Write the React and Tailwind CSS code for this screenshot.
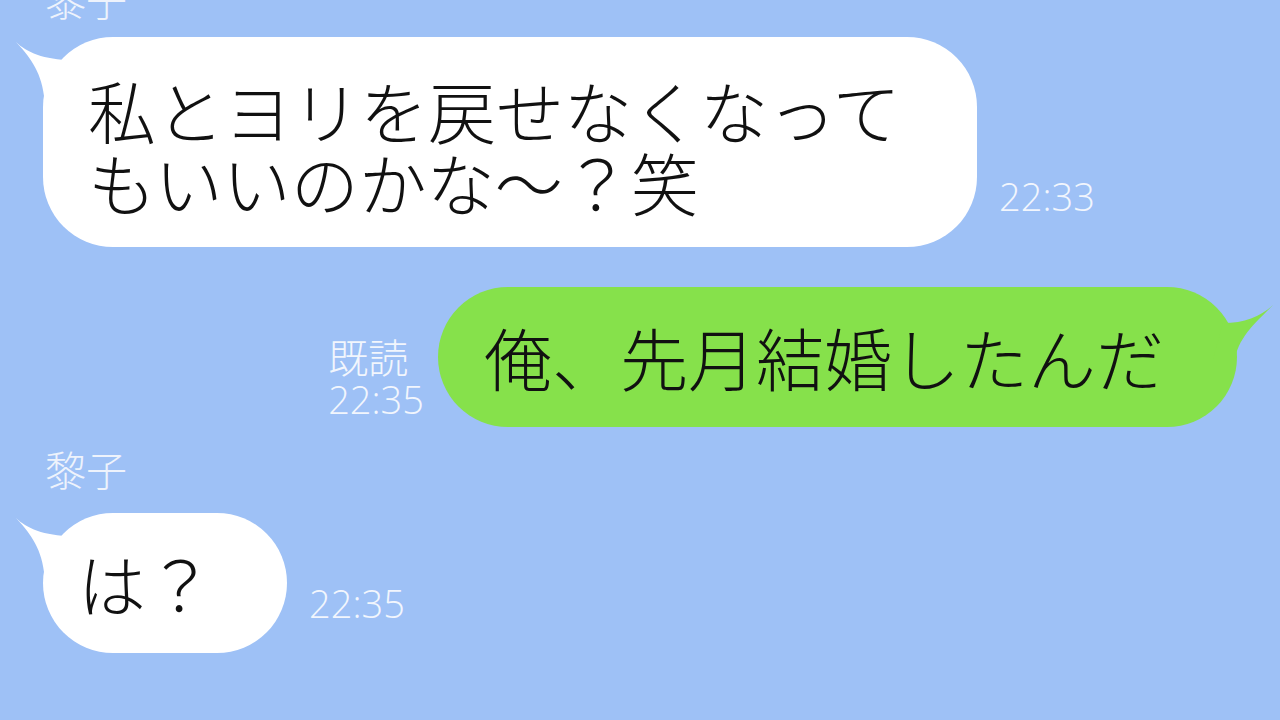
import React from "react";

function WhiteTail() {
  return (
    <svg
      className="absolute left-[-29px] top-[3px]"
      width="70"
      height="60"
      viewBox="0 0 70 60"
    >
      <path d="M2,2 C12,12 30,20 58,20 L64,56 L30,56 C27,30 14,15 2,2 Z" fill="#ffffff" />
    </svg>
  );
}

function GreenTail() {
  return (
    <svg
      className="absolute right-[-38px] top-[16px] -scale-x-100"
      width="70"
      height="60"
      viewBox="0 0 70 60"
    >
      <path d="M2,2 C14,13 30,20 52,20 L62,56 L40,56 C36,32 14,15 2,2 Z" fill="#86e14b" />
    </svg>
  );
}

const timeCls =
  "font-['Open_Sans','Noto_Sans_CJK_JP',sans-serif] font-light text-[38px] leading-none text-[#f2f6fd]";

export default function App() {
  return (
    <div className="w-[1280px] h-[720px] overflow-hidden bg-[#9ec1f6] flex flex-col font-['Noto_Sans_CJK_JP',sans-serif] text-[#111111]">
      {/* cut-off name */}
      <div className="pl-[45px] -mt-[22px] h-[40px] text-[41px] leading-[40px] font-light text-[#eef3fc]">
        黎子
      </div>

      {/* message 1 */}
      <div className="mt-[19px] flex items-end pl-[43px]">
        <div className="relative w-[934px] h-[210px] bg-white rounded-[70px] pl-[45px] pt-[37px]">
          <WhiteTail />
          <p className="relative text-[68px] leading-[72px] font-light whitespace-nowrap">
            私とヨリを戻せなくなって
            <br />
            もいいのかな～？笑
          </p>
        </div>
        <span className={"ml-[22px] mb-[32px] " + timeCls}>22:33</span>
      </div>

      {/* message 2 (mine) */}
      <div className="mt-[40px] flex justify-end items-end pr-[43px]">
        <div className="flex flex-col items-start mb-[9px] mr-[14px] text-[#f2f6fd]">
          <span className="text-[40px] leading-none font-light">既読</span>
          <span className={"mt-[4px] " + timeCls}>22:35</span>
        </div>
        <div className="relative w-[799px] h-[140px] bg-[#86e14b] rounded-[70px] pl-[46px] flex items-center">
          <GreenTail />
          <p className="relative text-[68px] leading-none font-light whitespace-nowrap">
            俺、先月結婚したんだ
          </p>
        </div>
      </div>

      {/* name */}
      <div className="mt-[21px] pl-[45px] h-[40px] text-[41px] leading-[40px] font-light text-[#eef3fc]">
        黎子
      </div>

      {/* message 3 */}
      <div className="mt-[25px] flex items-end pl-[43px]">
        <div className="relative w-[244px] h-[140px] bg-white rounded-[70px] pl-[35px] flex items-center">
          <WhiteTail />
          <p className="relative text-[68px] leading-none font-light whitespace-nowrap">は？</p>
        </div>
        <span className={"ml-[22px] mb-[31px] " + timeCls}>22:35</span>
      </div>
    </div>
  );
}
